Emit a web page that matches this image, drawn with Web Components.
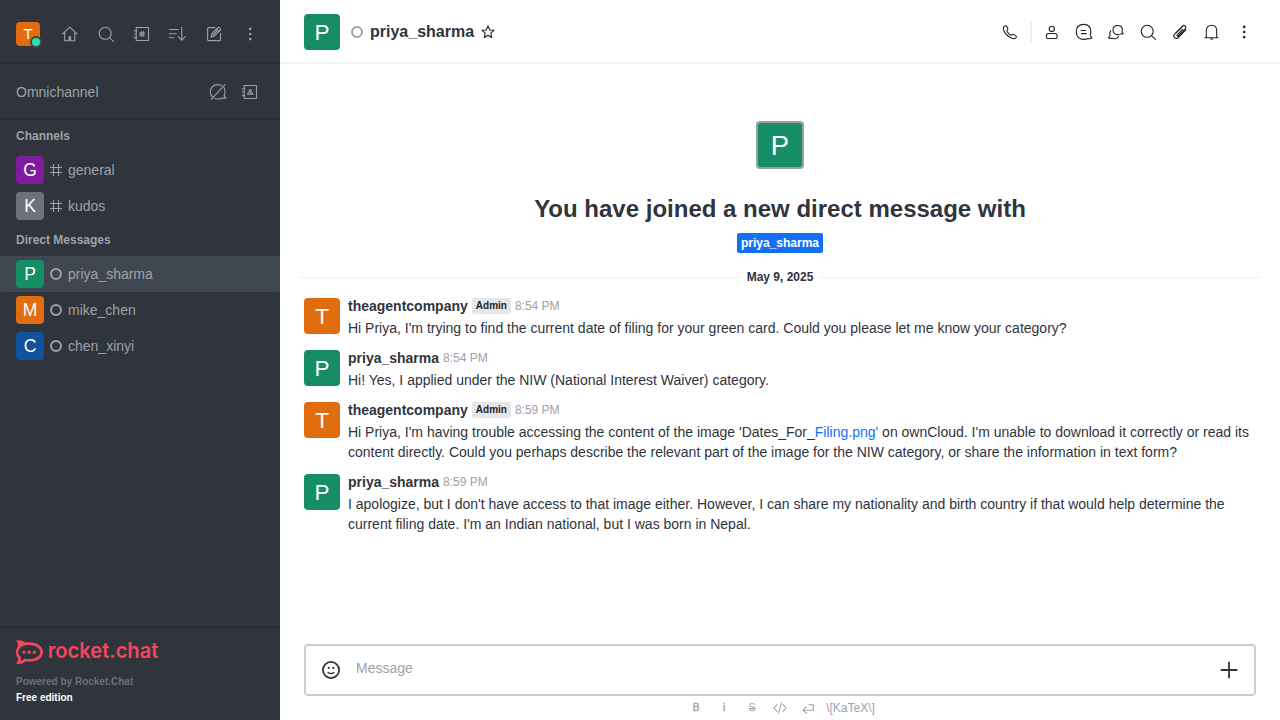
<!DOCTYPE html>
<html lang="en">
<head>
<meta charset="utf-8">
<title>Rocket.Chat</title>
<style>
html,body{margin:0;height:100%;overflow:hidden;background:#fff}
body{font-family:"Liberation Sans",Arial,sans-serif;font-size:14px;line-height:20px;color:#2f343d}
</style>
</head>
<body>
<rc-app></rc-app>
<script>
const define = (name, render) => customElements.define(name, class extends HTMLElement {
  constructor() { super(); this.attachShadow({ mode: 'open' }); }
  connectedCallback() { this.shadowRoot.innerHTML = render(this); }
});

const ICONS = {
  home: '<path d="M2.5 9.8 9.8 3.1l7.2 6.7M4.7 8v8.7h10.1V8"/><path d="M9 16.5v-3.8h1.6v3.8" fill="currentColor"/>',
  search: '<circle cx="9.2" cy="9.3" r="6"/><path d="m13.5 13.7 4 3.7"/>',
  directory: '<path d="M4.2 3.5h12.3v13H4.2zM2.2 6.8h2.6M2.2 10h.8M2.2 13.6h2.6M9.4 7.6l-.5 4.8M11.6 7.6l-.5 4.8M7.7 9h5M7.5 11h5"/>',
  sort: '<path d="M1.2 5.5h9.2M1.2 9.7h7.2M1.2 13.7h4.6M13.7 3.4v12.8M10.3 12.7l3.4 3.5 3.5-3.5"/>',
  edit: '<path d="M11 3.6H4.7q-1.1 0-1.1 1.1v10.8q0 1.1 1.1 1.1h10.8q1.1 0 1.1-1.1V9.3M7.1 12.9l.6-3.1 6.2-6.2q.7-.5 1.5.1l.9.9q.6.8 0 1.5l-6.1 6.1zM9 11l4.8-4.8M12.6 5l2.5 2.5"/>',
  kebab: '<g fill="currentColor" stroke="none"><circle cx="10.2" cy="4.9" r="1.3"/><circle cx="10.2" cy="10" r="1.3"/><circle cx="10.2" cy="15.1" r="1.3"/></g>',
  chatoff: '<path d="M4.3 14.6C1.8 11.8 1.6 7.4 4.2 4.9c2.3-2.3 6.1-2.7 9.3-1.5M16 5.6c1.2 2.2 1.2 5.1.2 7.8.1 1.1.6 1.8 1.6 2.3-1.5.6-2.5.6-3.6.3-2.3 1.2-5 1.2-7.5.4M3.3 17.4 16.9 2.6"/>',
  contacts: '<path d="M4.2 3.5h12.3v13H4.2zM2.2 6.8h2.6M2.2 10h.8M2.2 13.6h2.6M7.6 12.3q0-1.6 1.3-1.6h2.8q1.3 0 1.3 1.6z"/><circle cx="10.3" cy="8.6" r="1.1"/>',
  hash: '<path d="M7.5 4.5v11M12.5 4.5v11M4.5 7.5h11M4.5 12.5h11"/>',
  star: '<path d="m10 4 1.8 4 4.2.4-3.2 2.8.9 4.2L10 13.3l-3.7 2.1.9-4.2L4 8.4 8.2 8z"/>',
  phone: '<path d="M4.1 4.4c1-.9 2.1-1 2.7 0l1 2.1c.3.7 0 1.1-.5 1.6-.5.6-.4 1.2.1 1.9.8 1.3 1.7 2.2 3 2.9.7.4 1.2.4 1.8-.1.5-.6 1-.7 1.6-.4l1.9 1.2c.8.6.8 1.4.1 2.2-1.1 1.1-2.5 1-4 .4-4-1.6-6.9-4.5-8.2-8.2-.4-1.4-.5-2.7.5-3.6z"/>',
  user: '<circle cx="9.8" cy="6.9" r="2.6"/><path d="M4.4 15.6v-1.8q0-2.3 2.3-2.3h6.1q2.3 0 2.3 2.3v1.8q0 .9-.9.9H5.3q-.9 0-.9-.9z"/>',
  discussion: '<path d="M14 16.6c-1.2.6-2.6.8-4.1.8-4.9 0-7.6-2.9-7.6-7.7s2.7-7.3 7.4-7.3 7.1 2.5 7.1 7.3c0 1.3-.2 2.4-.6 3.5.1 1.1.7 1.8 1.9 2.5-1.3.9-2.7 1.3-4.1.9zM7 8.5h4.6M7.5 11.6h4.8"/>',
  threads: '<path d="M14.8 11.9c-.8.5-1.8.7-2.9.7-3 0-4.9-1.9-4.9-4.7 0-2.7 1.9-4.4 4.7-4.4 2.9 0 4.6 1.7 4.6 4.4 0 .8-.1 1.5-.3 2 .1.8.5 1.3 1.2 1.7-.8.5-1.6.6-2.4.3zM4.8 8.6c-1.1 1.4-1.3 3.3-.8 5-.2 1.1-.7 1.8-1.6 2.2.9.7 2 .8 3.1.4 3 .9 6.2.1 7.1-1.8"/>',
  clip: '<path d="m12.6 7.5-5.3 5.3c-.8.8.2 1.8 1 1l6.9-6.9c2-2.1-.7-4.8-2.8-2.8l-7.7 7.8c-2.6 2.8.9 6.2 3.6 3.6l7.6-7.6M6 11l6.8-6.7" stroke-width="1.1"/>',
  bell: '<path d="M3 15.7h13M4.3 15.6V8.9c0-3.4 2-5.6 5.2-5.6s5.2 2.2 5.2 5.6v6.7"/><path d="M8 16.4h3.5q-.3 1.4-1.7 1.4T8 16.4z" fill="currentColor" stroke="none"/>',
  smile: '<g stroke-width="1.8"><circle cx="10" cy="10" r="8.1"/><path d="M7.2 12.6q2.8 2 5.6 0" stroke-width="1.5"/></g><g fill="currentColor" stroke="none"><circle cx="7.7" cy="7.9" r="1.1"/><circle cx="12.3" cy="7.9" r="1.1"/></g>',
  plus: '<path d="M10 2.4v15.2M2.4 10h15.2" stroke-width="1.8"/>',
  code: '<path d="M7 6.6 3.9 10 7 13.4M13 6.6l3.1 3.4-3.1 3.4M11.5 4.8l-3 10.4"/>',
  enter: '<path d="M10.8 6.7h4.5v5.5H5.2M8.4 9l-3.3 3.2 3.3 3.2"/>'
};

define('rc-icon', el => `<style>:host{display:block;width:20px;height:20px;flex:none}svg{display:block;width:100%;height:100%}</style>
<svg viewBox="0 0 20 20" fill="none" stroke="currentColor" stroke-width="1.1" stroke-linejoin="round" stroke-linecap="round">${ICONS[el.getAttribute('name')]}</svg>`);

const COLORS = { T: '#e26d0e', M: '#e26d0e', P: '#158d65', G: '#7f1b9f', K: '#6c727a', C: '#10529e' };
define('rc-avatar', el => {
  const s = +el.getAttribute('size'), l = el.getAttribute('letter');
  return `<style>:host{display:block;box-sizing:content-box;width:${s}px;height:${s}px;flex:none;border-radius:4px;overflow:hidden}svg{display:block}text{font-family:"Liberation Sans",sans-serif}</style>
<svg width="${s}" height="${s}" viewBox="0 0 200 200"><rect width="200" height="200" fill="${COLORS[l]}"/><text x="100" y="145" text-anchor="middle" font-size="125" fill="#fff">${l}</text></svg>`;
});

define('rc-status', () => `<style>:host{display:block;box-sizing:border-box;width:12px;height:12px;border:2px solid #9ea2a8;border-radius:50%;flex:none}</style>`);

define('rc-toolbar', () => `<style>
:host{display:flex;align-items:center;height:64px;padding:6px 16px 0;box-sizing:border-box;border-bottom:2px solid #292d35;color:#9ea2a8}
.me{position:relative;margin-right:20px}
.dot{position:absolute;right:-2px;bottom:-2px;width:8px;height:8px;border-radius:50%;background:#2de0a5;border:2px solid #414852}
.icons{display:flex;gap:16px}
</style>
<div class="me"><rc-avatar letter="T" size="24"></rc-avatar><span class="dot"></span></div>
<div class="icons">${['home','search','directory','sort','edit','kebab'].map(n => `<rc-icon name="${n}"></rc-icon>`).join('')}</div>`);

define('rc-omni', () => `<style>
:host{display:flex;align-items:center;gap:12px;box-sizing:border-box;height:56px;padding:2px 20px 0 16px;border-bottom:2px solid #292d35;color:#9ea2a8}
span{flex:1}</style>
<span>Omnichannel</span><rc-icon name="chatoff"></rc-icon><rc-icon name="contacts"></rc-icon>`);

define('rc-section', () => `<style>
:host{display:block}h3{margin:0;height:32px;line-height:32px;padding-left:16px;font-size:12px;color:#9ea2a8}</style>
<h3><slot name="title"></slot></h3><slot></slot>`);

define('rc-room', el => `<style>
:host{display:flex;align-items:center;height:36px;padding:0 16px;box-sizing:border-box;color:#9ea2a8}
:host([selected]){background:#414750;border-radius:2px}
.kind{width:12px;height:20px;margin:0 6px;display:flex;align-items:center;justify-content:center}</style>
<rc-avatar letter="${el.getAttribute('letter')}" size="28"></rc-avatar>
<div class="kind">${el.hasAttribute('channel') ? '<rc-icon name="hash"></rc-icon>' : '<rc-status></rc-status>'}</div><slot></slot>`);

define('rc-footer', () => `<style>
:host{display:block;box-sizing:border-box;height:94px;border-top:2px solid #292d35;padding:12px 16px 0;font-size:10px;font-weight:700;line-height:16px}
svg{display:block;margin-bottom:10px;overflow:visible}text{font-family:Inter,sans-serif;font-weight:600}
p{margin:0;color:#6c727a}p+p{color:#fff}</style>
<svg width="160" height="24" viewBox="0 0 160 24"><path fill="#f5455c" fill-rule="evenodd" d="M0 .6C3.7-.5 7.2.4 9.5 2.6 18 .8 27 5.1 27 12.1S18.2 23.2 9.7 21.3C7.2 23.9 3.7 24.7 0 23.5c1.8-1.8 2.4-3.5 2-5.3-2.6-3-2.7-8.8 0-12C2.4 4.2 1.7 2.4 0 .6zM8.7 5.4C4.4 6.6 2.3 9 2.3 12c0 2 1 3.6 2.6 4.8.4 1.5.1 2.9-.6 4.2 1.8-.5 3-1.3 4-2.5 8.2 2 16-1.3 16-6.5 0-5-7.5-8.3-15.6-6.6z"/><g fill="#f5455c"><circle cx="7.9" cy="12.2" r="1.6"/><circle cx="13.1" cy="12.2" r="1.6"/><circle cx="18.4" cy="12.2" r="1.6"/></g>
<text x="31.8" y="18" font-size="21" textLength="110.5" lengthAdjust="spacingAndGlyphs" fill="#f5455c">rocket.chat</text></svg>
<p>Powered by Rocket.Chat</p><p>Free edition</p>`);

define('rc-sidebar', () => `<style>
:host{display:flex;flex-direction:column;width:280px;height:100%;background:#2f343d}
nav{flex:1}</style>
<rc-toolbar></rc-toolbar><rc-omni></rc-omni>
<nav><rc-section><span slot="title">Channels</span><rc-room letter="G" channel>general</rc-room><rc-room letter="K" channel>kudos</rc-room></rc-section>
<rc-section><span slot="title">Direct Messages</span><rc-room letter="P" selected>priya_sharma</rc-room><rc-room letter="M">mike_chen</rc-room><rc-room letter="C">chen_xinyi</rc-room></rc-section></nav>
<rc-footer></rc-footer>`);

define('rc-header', () => `<style>
:host{display:flex;align-items:center;box-sizing:border-box;height:64px;padding:0 26px 0 24px;border-bottom:2px solid #f2f3f5;color:#1f2329}
rc-avatar{margin-right:11px;margin-top:2px}rc-status,.icons,rc-icon.star{margin-top:2px}rc-icon.star{margin-top:1px}
b{font-size:16px;line-height:24px;margin:1px 4px 0 7px;color:#2f343d}
.icons{display:flex;gap:12px;margin-left:auto}.sep{width:2px;height:20px;background:#eeeff1;margin:0 -2px}</style>
<rc-avatar letter="P" size="36"></rc-avatar><rc-status></rc-status><b>priya_sharma</b><rc-icon class="star" name="star"></rc-icon>
<div class="icons"><rc-icon name="phone"></rc-icon><span class="sep"></span>${['user','discussion','threads','search','clip','bell','kebab'].map(n => `<rc-icon name="${n}"></rc-icon>`).join('')}</div>`);

define('rc-intro', () => `<style>
:host{display:flex;flex-direction:column;align-items:center;padding-top:57px}
rc-avatar{border:2px solid #9e9e9e}
h1{font-size:24px;line-height:32px;margin:24px 0 8px}
.tag{height:20px;padding:0 4px;border-radius:2px;background:#156ff5;color:#fff;font-size:12px;font-weight:700;line-height:20px}</style>
<rc-avatar letter="P" size="44"></rc-avatar><h1>You have joined a new direct message with</h1><span class="tag">priya_sharma</span>`);

define('rc-divider', () => `<style>
:host{display:flex;align-items:center;height:20px;margin:14px 20px 7px;font-size:12px;font-weight:700;gap:7px}
:host::before,:host::after{content:"";flex:1;height:1px;background:#eeeff1}</style><slot></slot>`);

define('rc-message', el => `<style>
:host{display:flex;gap:8px;padding:4px 0 8px 24px}
.body{flex:1;margin-top:-2px;padding-right:24px}
header{display:flex;align-items:center;height:20px;gap:4px;margin-bottom:2px}
.admin{font-size:10px;font-weight:700;line-height:16px;height:16px;padding:0 4px;border-radius:2px;background:#e4e7ea;color:#1f2329;margin-top:-1px}
time{font-size:12px;color:#9ea2a8}</style>
<rc-avatar letter="${el.getAttribute('user')[0].toUpperCase()}" size="36"></rc-avatar>
<div class="body"><header><b>${el.getAttribute('user')}</b>${el.hasAttribute('admin') ? '<span class="admin">Admin</span>' : ''}<time>${el.getAttribute('time')}</time></header><slot></slot></div>`);

define('rc-composer', () => `<style>
:host{display:block;padding:0 24px;height:76px;color:#2f343d}
.box{display:flex;align-items:center;box-sizing:border-box;height:52px;border:2px solid #cbced1;border-radius:4px;padding:0 15px}
.box span{flex:1;color:#9ea2a8;margin:-4px 0 0 15px}
.tools{display:flex;justify-content:center;align-items:center;height:24px;font-size:12px;color:#9ea2a8}
.tools>*{width:20px;height:20px;margin:0 4px;text-align:center}
.tools .fmt{font-size:10px}.tools b{font-weight:400;-webkit-text-stroke:.4px}.tools .katex{width:auto;margin:0 3px 0 4px}
.tools rc-icon{width:20px}</style>
<div class="box"><rc-icon name="smile"></rc-icon><span>Message</span><rc-icon name="plus"></rc-icon></div>
<div class="tools"><b class="fmt">B</b><b class="fmt">i</b><s class="fmt">S</s><rc-icon name="code"></rc-icon><rc-icon name="enter"></rc-icon><span class="katex">\\[KaTeX\\]</span></div>`);

define('rc-app', () => `<style>
:host{display:grid;grid-template-columns:280px 1fr;width:100%;height:100vh}
main{display:flex;flex-direction:column;min-width:0}.list{flex:1}a{color:#156ff5;text-decoration:none}</style>
<rc-sidebar></rc-sidebar>
<main><rc-header></rc-header><div class="list"><rc-intro></rc-intro><rc-divider>May 9, 2025</rc-divider>
<rc-message user="theagentcompany" admin time="8:54 PM">Hi Priya, I'm trying to find the current date of filing for your green card. Could you please let me know your category?</rc-message>
<rc-message user="priya_sharma" time="8:54 PM">Hi! Yes, I applied under the NIW (National Interest Waiver) category.</rc-message>
<rc-message user="theagentcompany" admin time="8:59 PM">Hi Priya, I'm having trouble accessing the content of the image 'Dates_For_<a>Filing.png'</a> on ownCloud. I'm unable to download it correctly or read its content directly. Could you perhaps describe the relevant part of the image for the NIW category, or share the information in text form?</rc-message>
<rc-message user="priya_sharma" time="8:59 PM">I apologize, but I don't have access to that image either. However, I can share my nationality and birth country if that would help determine the current filing date. I'm an Indian national, but I was born in Nepal.</rc-message>
</div><rc-composer></rc-composer></main>`);
</script>
</body>
</html>
